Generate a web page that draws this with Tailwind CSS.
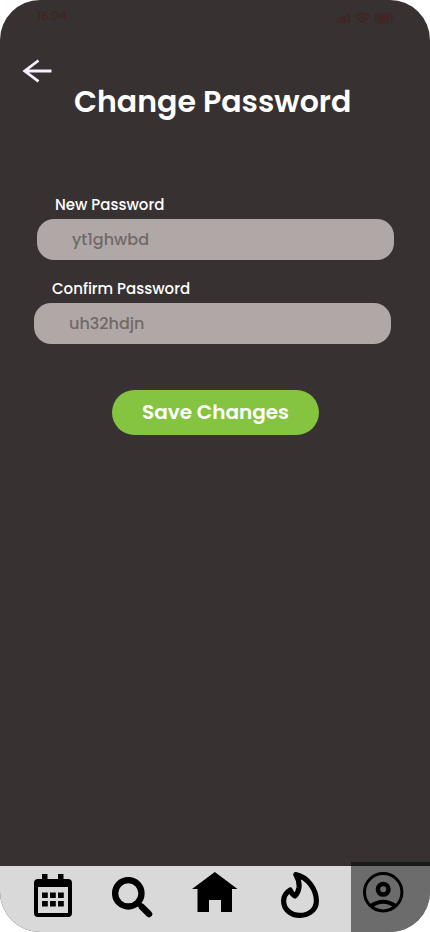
<!DOCTYPE html>
<html lang="en">
<head>
<meta charset="utf-8">
<meta name="viewport" content="width=device-width, initial-scale=1">
<title>Change Password</title>
<script src="https://cdn.jsdelivr.net/npm/@tailwindcss/browser@4"></script>
</head>
<body class="bg-white font-[Poppins,Inter,sans-serif]">
<div class="relative flex h-[932px] w-[430px] flex-col overflow-hidden rounded-[40px] bg-[#373131] text-white">
  <header class="flex h-8 items-center justify-between pl-[37px] pr-[36px] text-[#3f2524]">
    <span class="text-[12px] font-medium leading-8 tracking-[-0.1px]">16:04</span>
    <svg class="mt-[3px]" width="57" height="12" viewBox="0 0 57 12" fill="currentColor">
      <path d="M0 7h2v4H0zM3 5h2.400v6H3zM6.500 3.500h2.400v7.500H6.500zM10 1h3v10h-3z"/>
      <g fill="none" stroke="currentColor" stroke-width="1.800"><path d="M17.500 4.700Q25.500-1.700 33.500 4.700M20.700 7.500Q25.500 3.800 30.300 7.500"/></g>
      <path d="M23 9q2.500-1.600 5 0l-2.500 2.300z"/>
      <rect x="38.600" y="1.600" width="16" height="9" rx="2" fill="none" stroke="currentColor"/>
      <rect x="40" y="3" width="12" height="6.300" rx=".5"/><path d="M56 4.500q1.500 1.500 0 3z"/>
    </svg>
  </header>
  <a class="ml-[22px] mt-[27px] h-6 w-8" aria-label="Back">
    <svg width="32" height="24" viewBox="0 0 32 24" fill="none" stroke="#f8f0fc" stroke-width="2.800"><path d="M16.500 1.500L2.700 12L16.500 22.300M2.500 12H29.500"/></svg>
  </a>
  <h1 class="-mt-[5px] ml-[74px] h-12 whitespace-nowrap text-[30px] font-semibold leading-[48px]">Change Password</h1>
  <form class="mt-[67px] flex flex-col">
    <label class="ml-[55px] h-[26px] text-[15px] font-medium leading-6">New Password</label>
    <div class="ml-[37px] h-[41px] w-[357px] rounded-[17px] bg-[#afa8a7] pl-[35px] text-[16px] font-medium leading-[41px] text-[#716968]">yt1ghwbd</div>
    <label class="ml-[52px] mt-[17px] h-[26px] text-[15px] font-medium leading-6">Confirm Password</label>
    <div class="ml-[34px] h-[41px] w-[357px] rounded-[17px] bg-[#afa8a7] pl-[35px] text-[16px] font-medium leading-[41px] text-[#716968]">uh32hdjn</div>
    <button type="button" class="ml-[112px] mt-[46px] h-[45px] w-[207px] rounded-full bg-[#84c441] pb-[2px] text-[20px] font-semibold">Save Changes</button>
  </form>
  <nav class="mt-auto flex h-[66px] bg-[#d9d9d9] text-black">
    <a class="w-[106px] pl-[34px] pt-[8px]">
      <svg width="38" height="43" viewBox="0 0 38 43" fill="currentColor"><path fill-rule="evenodd" d="M8 0h5.500v5H24V0h5.500v5H34a4 4 0 0 1 4 4v30a4 4 0 0 1-4 4H4a4 4 0 0 1-4-4V9a4 4 0 0 1 4-4h4zM4 13v26h30V13z"/><path d="M8 18.500h5.800v5.500H8zM16 18.500h5.800v5.500H16zM24 18.500h5.800v5.500H24zM8 27h5.800v5.500H8zM16 27h5.800v5.500H16zM24 27h5.800v5.500H24z"/></svg>
    </a>
    <a class="w-[86px] pl-[6px] pt-[11px]">
      <svg width="41" height="41" viewBox="0 0 41 41" fill="none" stroke="currentColor"><circle cx="16.300" cy="16.300" r="13.200" stroke-width="6.300"/><path d="M26 26L30 30" stroke-width="5"/><path d="M30 30L37 37" stroke-width="6.500" stroke-linecap="round"/></svg>
    </a>
    <a class="w-[89px] pt-[6px]">
      <svg width="46" height="40" viewBox="0 0 46 40" fill="currentColor"><path d="M22.800 0L45.500 17H40V40H29V28H17V40H5.500V17H0z"/></svg>
    </a>
    <a class="w-[70px] pt-[6px]">
      <svg width="38" height="46" viewBox="0 0 38 46" fill="none" stroke="currentColor" stroke-width="5.200" stroke-linejoin="round"><path d="M14.800 2.600C17.500 7 18.500 11 18 15.500C17.500 19 16 22 14 24C11.500 22.500 10 20.500 9.200 18C5 20.500 2.600 24 2.600 29C2.600 37 9.500 43.400 19 43.400C28 43.400 35.400 37.500 35.400 29C35.400 18 27 5 14.800 2.600Z"/></svg>
    </a>
  </nav>
  <a class="absolute bottom-0 right-0 h-[70px] w-[79px] bg-black/50 pl-[12px] pt-[10px] text-black" aria-label="Profile">
    <svg width="41" height="41" viewBox="0 0 41 41" fill="none" stroke="currentColor"><circle cx="20.200" cy="20.200" r="18.700" stroke-width="3"/><circle cx="20.200" cy="17.300" r="5.300" stroke-width="4.500"/><path d="M8 34Q20.200 25.500 32.400 34" stroke-width="4"/></svg>
  </a>
</div>
</body>
</html>
